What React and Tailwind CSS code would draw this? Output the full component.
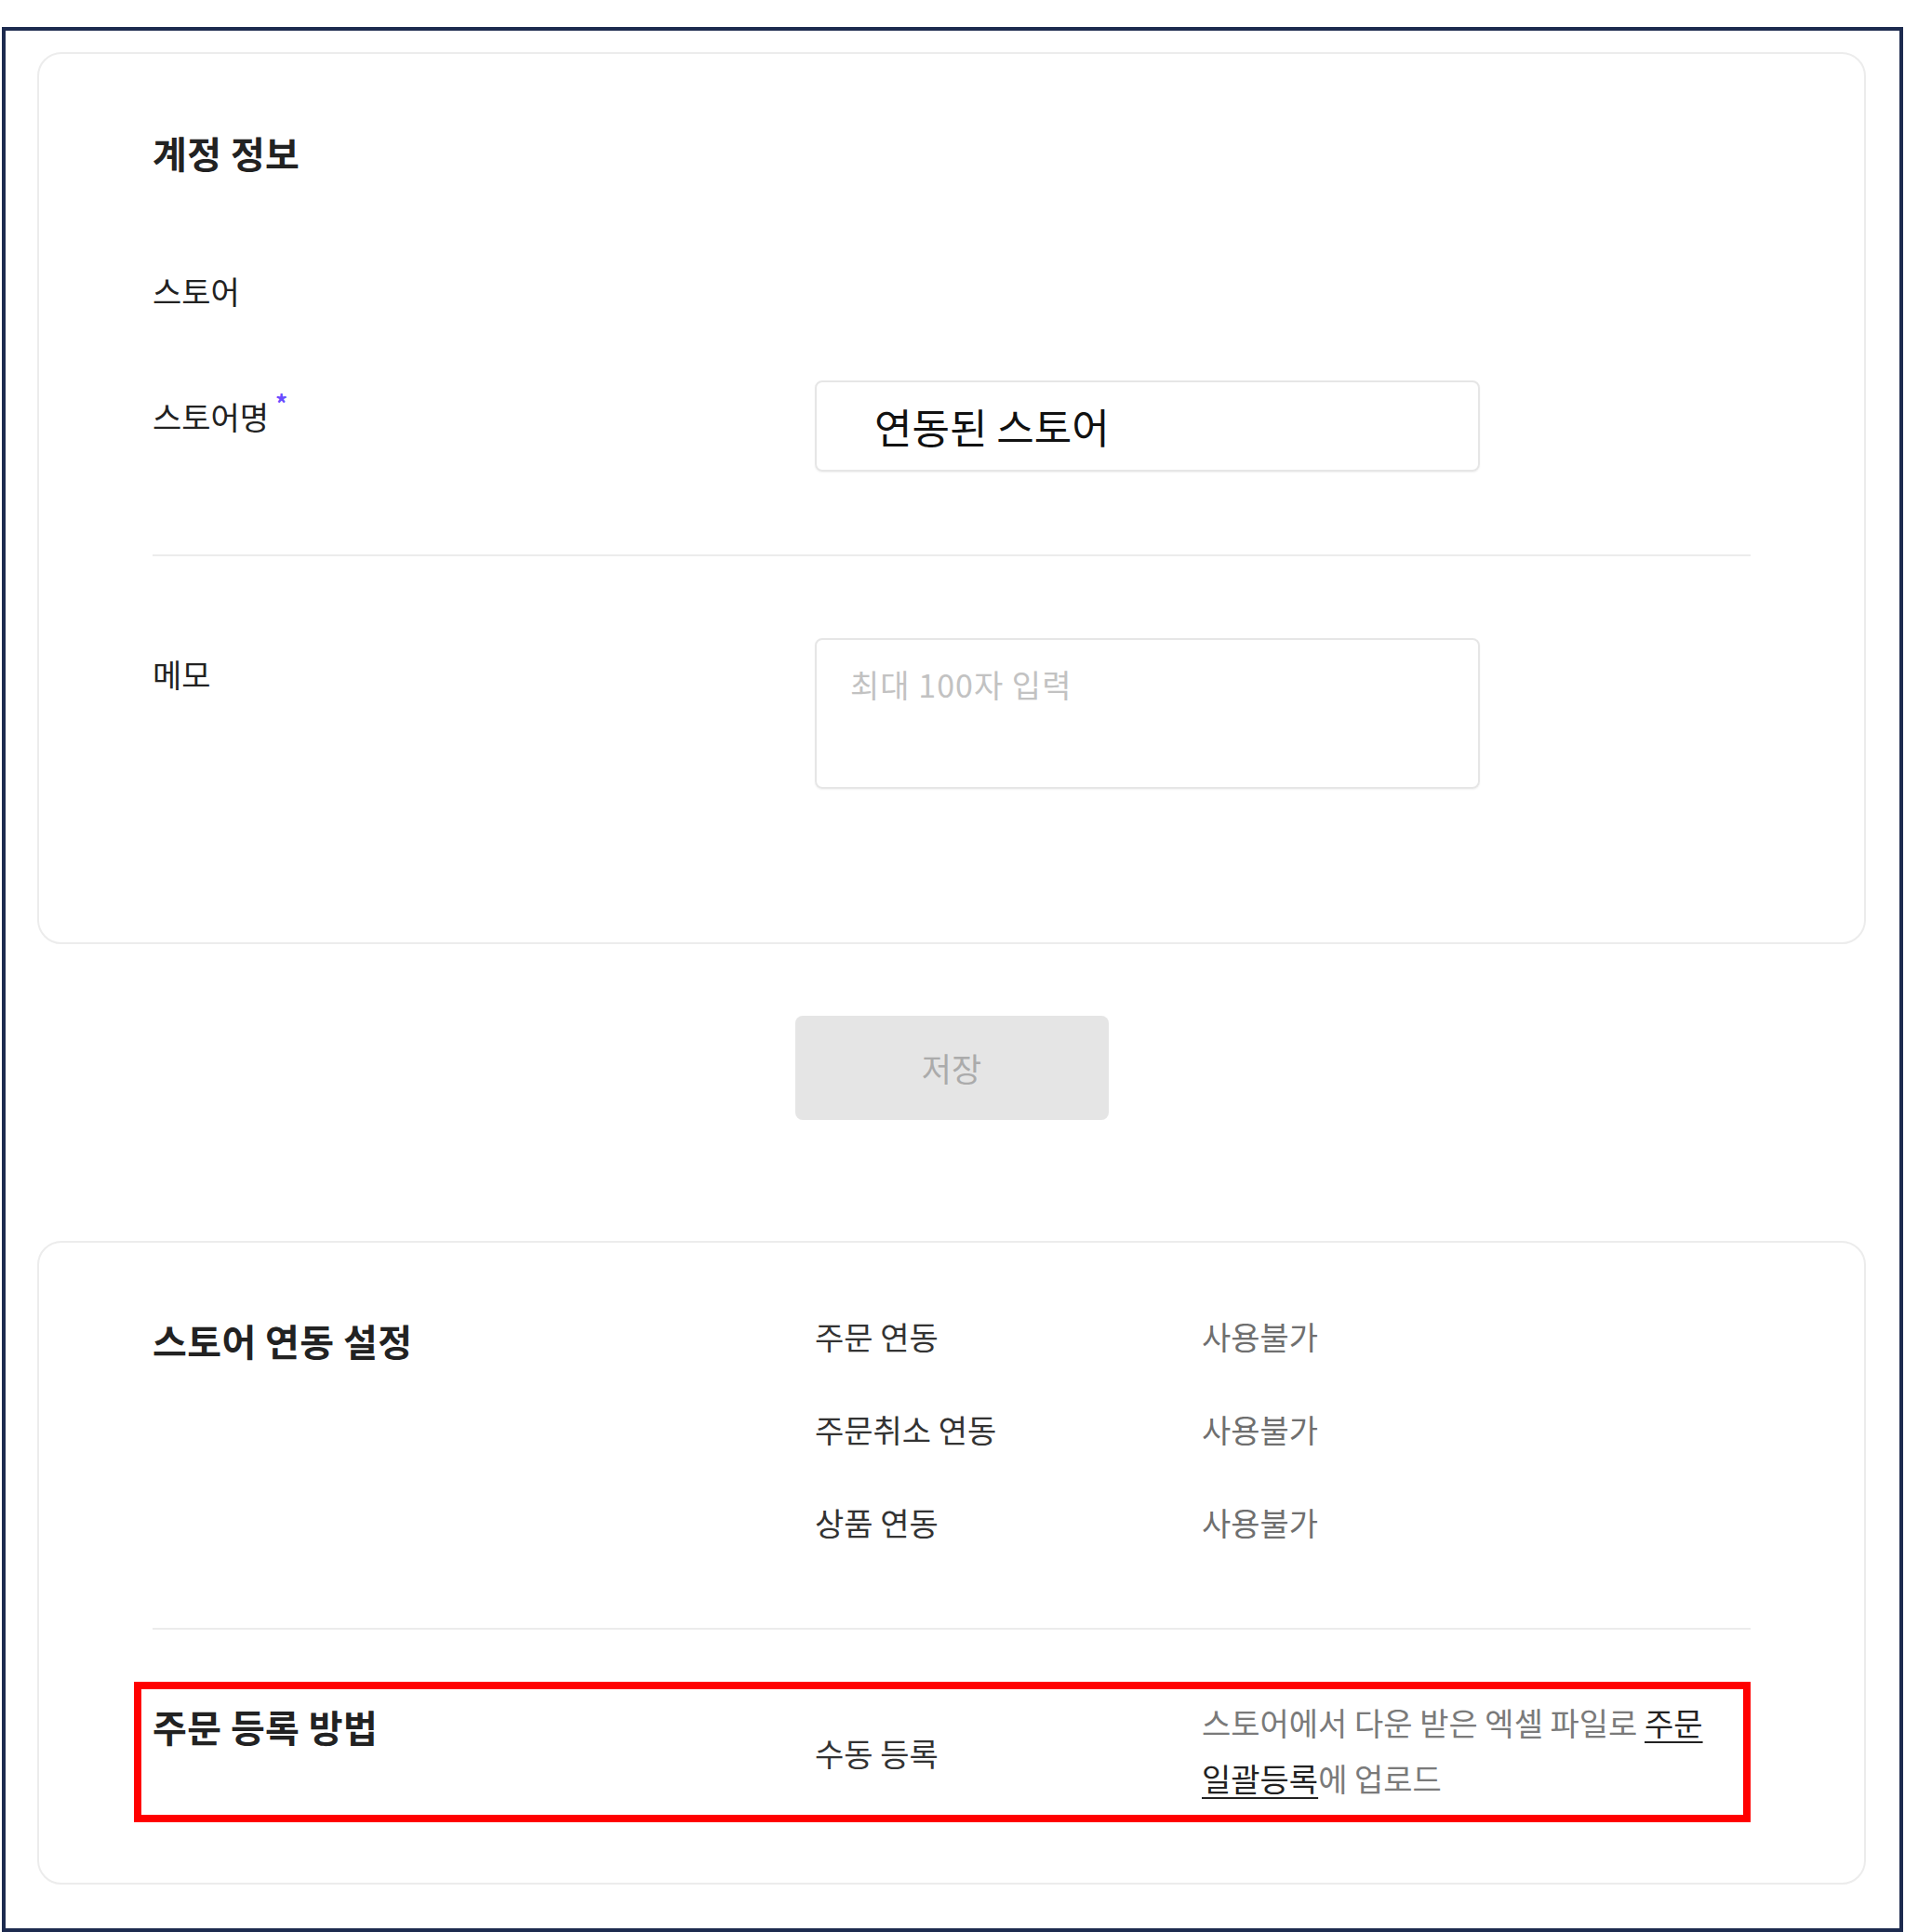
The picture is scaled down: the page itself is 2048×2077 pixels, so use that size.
// App.jsx
const font = { fontFamily: '"Noto Sans CJK KR", "Noto Sans", sans-serif' };

function Label({ children, required }) {
  return (
    <div className="relative inline-block text-[34px] leading-[48px] text-[#222]">
      {children}
      {required && (
        <span className="absolute -top-[4px] -right-[20px] text-[26px] font-bold leading-none text-[#6a4cff]">
          *
        </span>
      )}
    </div>
  );
}

function SyncRow({ name, value }) {
  return (
    <div className="flex text-[34px] leading-[48px]">
      <span className="w-[416px] text-[#333]">{name}</span>
      <span className="text-[#6f6f6f]">{value}</span>
    </div>
  );
}

export default function App() {
  return (
    <div className="bg-white min-h-[2077px] pt-[29px]" style={font}>
      <div className="ml-[2px] w-[2044px] border-[4px] border-[#1d2b4f] pt-[23px] pb-[47px] pl-[34px] pr-[36px]">
        {/* 계정 정보 */}
        <div className="border-2 border-[#ececec] rounded-[26px] px-[122px] pt-[78px] pb-[165px]">
          <h2 className="text-[40px] leading-[56px] font-bold tracking-[0.01em] text-[#222]">
            계정 정보
          </h2>

          <div className="mt-[97px]">
            <Label>스토어</Label>
          </div>

          <div className="mt-[72px] grid grid-cols-[712px_1fr]">
            <div className="pt-[15px]">
              <Label required>스토어명</Label>
            </div>
            <div className="w-[715px] h-[98px] border-2 border-[#e6e6e6] rounded-[8px] shadow-[0_1px_2px_rgba(0,0,0,0.06)] flex items-center pl-[62px] text-[44px] text-[#111]">
              연동된 스토어
            </div>
          </div>

          <div className="mt-[89px] h-[2px] bg-[#ececec]" />

          <div className="mt-[88px] grid grid-cols-[712px_1fr]">
            <div className="pt-[15px]">
              <Label>메모</Label>
            </div>
            <div className="w-[715px] h-[162px] border-2 border-[#e6e6e6] rounded-[8px] shadow-[0_1px_2px_rgba(0,0,0,0.06)] pl-[36px] pt-[24px] text-[34px] leading-[48px] tracking-[0.03em] text-[#c2c2c2]">
              최대 100자 입력
            </div>
          </div>
        </div>

        {/* 저장 */}
        <div className="flex justify-center mt-[77px]">
          <button className="w-[337px] h-[112px] rounded-[8px] bg-[#e5e5e5] text-[35px] text-[#ababab]">
            저장
          </button>
        </div>

        {/* 스토어 연동 설정 */}
        <div className="mt-[130px] border-2 border-[#ececec] rounded-[26px] px-[122px] pt-[77px] pb-[65px]">
          <div className="flex">
            <h2 className="w-[712px] text-[40px] leading-[56px] font-bold tracking-[0.01em] text-[#222]">
              스토어 연동 설정
            </h2>
            <div className="flex flex-col gap-[52px]">
              <SyncRow name="주문 연동" value="사용불가" />
              <SyncRow name="주문취소 연동" value="사용불가" />
              <SyncRow name="상품 연동" value="사용불가" />
            </div>
          </div>

          <div className="mt-[89px] h-[2px] bg-[#ececec]" />

          <div className="mt-[56px] -ml-[20px] border-[8px] border-[#ff0000] pl-[12px] pt-[12px] pb-[9px]">
            <div className="flex items-start">
              <h2 className="w-[712px] shrink-0 text-[40px] leading-[56px] font-bold tracking-[0.01em] text-[#222]">
                주문 등록 방법
              </h2>
              <div className="w-[416px] shrink-0 self-center text-[34px] leading-[48px] text-[#333]">
                수동 등록
              </div>
              <p className="-mt-[6px] max-w-[560px] break-keep text-[34px] leading-[60px] text-[#7a7a7a]">
                스토어에서 다운 받은 엑셀 파일로{" "}
                <span className="text-[#222] underline underline-offset-[6px] decoration-2">주문</span>{" "}
                <span className="text-[#222] underline underline-offset-[6px] decoration-2">일괄등록</span>
                에 업로드
              </p>
            </div>
          </div>
        </div>
      </div>
    </div>
  );
}
